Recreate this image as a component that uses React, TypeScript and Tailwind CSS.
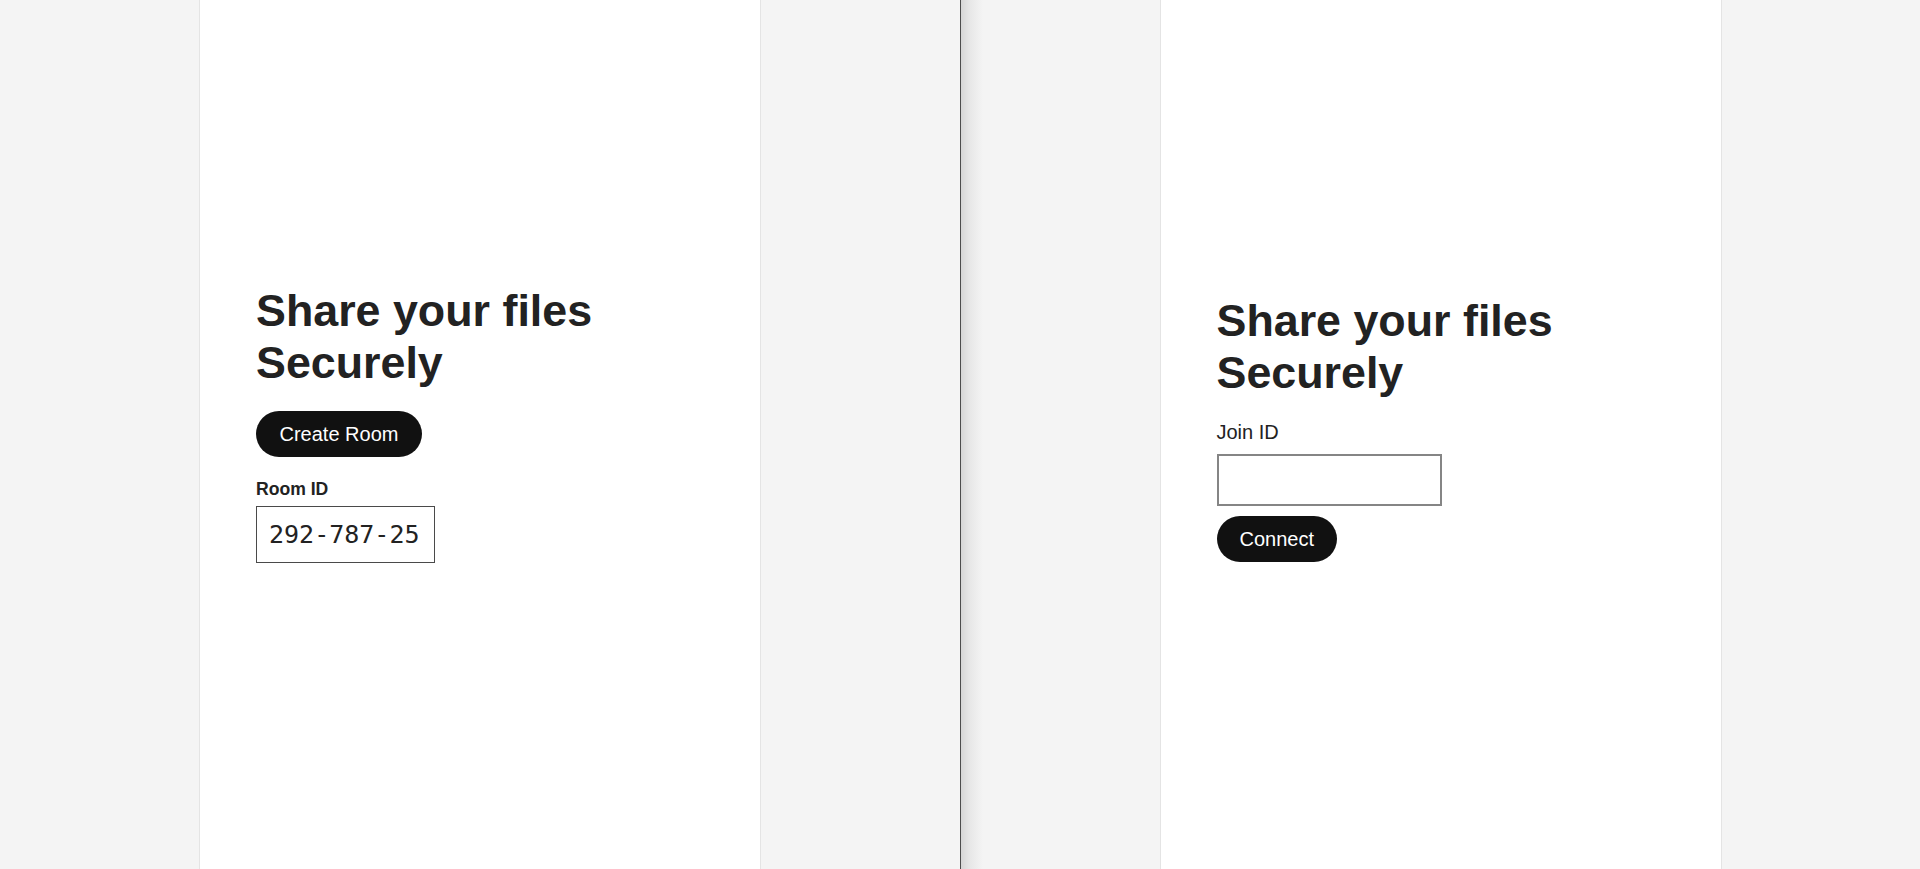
import React from "react";

const sans = { fontFamily: '"Liberation Sans", Arial, sans-serif' };
const mono = { fontFamily: '"DejaVu Sans Mono", "Liberation Mono", monospace' };

function Heading() {
  return (
    <h1 className="text-[44.8px] leading-[51.5px] font-bold text-[#222222]" style={sans}>
      Share your files
      <br />
      Securely
    </h1>
  );
}

export default function App() {
  return (
    <div className="flex h-[869px] w-full overflow-hidden bg-[#f4f4f4]" style={sans}>
      {/* Left pane */}
      <div className="flex h-full w-[960px] shrink-0 justify-center bg-[#f4f4f4]">
        <div className="flex h-full w-[562px] flex-col items-start border-x border-[#e4e4e4] bg-white px-[56px] pt-[285px]">
          <Heading />
          <button className="mt-[23px] flex h-[46px] items-center rounded-full bg-[#111111] px-[23.5px] text-[20px] text-white">
            Create Room
          </button>
          <label className="mt-[22px] text-[17.6px] leading-[20px] font-bold text-[#222222]">Room ID</label>
          <input
            readOnly
            value="292-787-25"
            className="mt-[7px] h-[57px] w-[179px] border border-[#4a4a4a] bg-white pl-[12px] pr-[4px] text-[25px] text-[#222222] outline-none"
            style={mono}
          />
        </div>
      </div>
      {/* Divider */}
      <div className="h-full w-px shrink-0 bg-[#4d4d4d]" />
      {/* Right pane */}
      <div className="flex h-full flex-1 justify-center bg-[linear-gradient(to_right,#d6d6d6_0px,#e6e6e6_8px,#f4f4f4_22px)]">
        <div className="flex h-full w-[562px] flex-col items-start border-x border-[#e4e4e4] bg-white px-[56px] pt-[295px]">
          <Heading />
          <label className="mt-[22.5px] text-[20px] leading-[23px] text-[#222222]">Join ID</label>
          <input
            className="mt-[10px] h-[52px] w-[225px] border-2 border-[#858585] bg-white px-[8px] text-[20px] outline-none"
            style={sans}
          />
          <button className="mt-[10.5px] flex h-[46px] items-center rounded-full bg-[#111111] px-[23px] text-[20px] text-white">
            Connect
          </button>
        </div>
      </div>
    </div>
  );
}
